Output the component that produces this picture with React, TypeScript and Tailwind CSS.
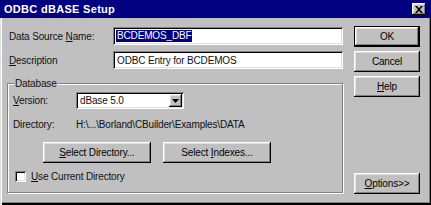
import React from "react";

const raised =
  "shadow-[inset_-1px_-1px_#000,inset_1px_1px_#fff,inset_-2px_-2px_#808080,inset_2px_2px_#dfdfdf]";
const sunken =
  "shadow-[inset_1px_1px_#808080,inset_-1px_-1px_#fff,inset_2px_2px_#000,inset_-2px_-2px_#dfdfdf]";

function Btn({
  children,
  w,
  def,
}: {
  children: React.ReactNode;
  w: string;
  def?: boolean;
}) {
  return (
    <div
      className={`${w} h-[21px] flex items-center justify-center bg-[#c0c0c0] text-black ${
        def
          ? "border border-black shadow-[inset_-1px_-1px_#000,inset_1px_1px_#fff,inset_-2px_-2px_#808080,inset_2px_2px_#dfdfdf]"
          : raised
      }`}
    >
      {children}
    </div>
  );
}

export default function App() {
  return (
    <div
      className="w-[431px] h-[205px] bg-[#c0c0c0] flex flex-col text-[10px] tracking-[-0.15px] leading-[13px] text-[#111] overflow-hidden shadow-[inset_1px_0_#dfdfdf,inset_2px_0_#fff,inset_-1px_-2px_#000,inset_-2px_-3px_#808080]"
      style={{ fontFamily: '"Liberation Sans", Arial, sans-serif' }}
    >
      <div className="h-[18px] bg-[#000080] flex items-center justify-between pl-[4px] pr-[5px] shrink-0">
        <span className="text-white font-bold text-[11px] tracking-[0.3px]">
          ODBC dBASE Setup
        </span>
        <div
          className={`w-[14px] h-[12px] bg-[#c0c0c0] flex items-center justify-center ${raised}`}
        >
          <svg width="8" height="7" viewBox="0 0 8 7">
            <path
              d="M0 0h2l2 2.2L6 0h2L5 3.5 8 7H6L4 4.8 2 7H0l3-3.5z"
              fill="#000"
            />
          </svg>
        </div>
      </div>

      <div className="flex flex-row pl-[7px] pt-[8px]">
        <div className="w-[336px] flex flex-col">
          <div className="flex items-center h-[18px] mt-[1px]">
            <span className="pl-[2px] w-[106px]">
              Data Source <u>N</u>ame:
            </span>
            <div
              className={`w-[230px] h-[18px] bg-white flex items-center pl-[3px] ${sunken}`}
            >
              <span className="bg-[#000080] text-white px-[1px] leading-[12px]">
                BCDEMOS_DBF
              </span>
            </div>
          </div>
          <div className="flex items-center h-[18px] mt-[6px]">
            <span className="pl-[2px] w-[106px]">
              <u>D</u>escription
            </span>
            <div
              className={`w-[230px] h-[18px] bg-white flex items-center pl-[4px] ${sunken}`}
            >
              ODBC Entry for BCDEMOS
            </div>
          </div>

          <div className="relative mt-[14px] w-[336px] h-[110px] border border-[#808080] shadow-[inset_1px_1px_#fff,1px_1px_#fff]">
            <span className="absolute left-[6px] top-[-7px] px-[1px] bg-[#c0c0c0]">
              Database
            </span>
            <div className="flex flex-col pl-[5px] pt-[8px]">
              <div className="flex items-center h-[17px]">
                <span className="w-[63px]">
                  <u>V</u>ersion:
                </span>
                <div
                  className={`w-[108px] h-[17px] bg-white flex items-center justify-between pl-[4px] pr-[2px] ${sunken}`}
                >
                  <span>dBase 5.0</span>
                  <div
                    className={`w-[13px] h-[13px] bg-[#c0c0c0] flex items-center justify-center ${raised}`}
                  >
                    <svg width="7" height="4" viewBox="0 0 7 4">
                      <path d="M0 0h7L3.5 4z" fill="#000" />
                    </svg>
                  </div>
                </div>
              </div>
              <div className="flex items-center h-[13px] mt-[9px]">
                <span className="w-[63px]">Directory:</span>
                <span>H:\...\Borland\CBuilder\Examples\DATA</span>
              </div>
              <div className="flex items-center mt-[11px] pl-[30px] gap-[12px]">
                <Btn w="w-[108px]">
                  <span>
                    <u>S</u>elect Directory...
                  </span>
                </Btn>
                <Btn w="w-[108px]">
                  <span>
                    Select <u>I</u>ndexes...
                  </span>
                </Btn>
              </div>
              <div className="flex items-center mt-[7px] pl-[2px] h-[12px]">
                <div
                  className={`w-[11px] h-[11px] bg-white ${sunken}`}
                ></div>
                <span className="ml-[5px]">
                  <u>U</u>se Current Directory
                </span>
              </div>
            </div>
          </div>
        </div>

        <div className="ml-[11px] w-[66px] flex flex-col">
          <Btn w="w-[66px]" def>
            OK
          </Btn>
          <div className="mt-[4px]">
            <Btn w="w-[66px]">Cancel</Btn>
          </div>
          <div className="mt-[4px]">
            <Btn w="w-[66px]">
              <span>
                <u>H</u>elp
              </span>
            </Btn>
          </div>
          <div className="mt-[76px]">
            <Btn w="w-[66px]">
              <span>
                <u>O</u>ptions&gt;&gt;
              </span>
            </Btn>
          </div>
        </div>
      </div>
    </div>
  );
}
